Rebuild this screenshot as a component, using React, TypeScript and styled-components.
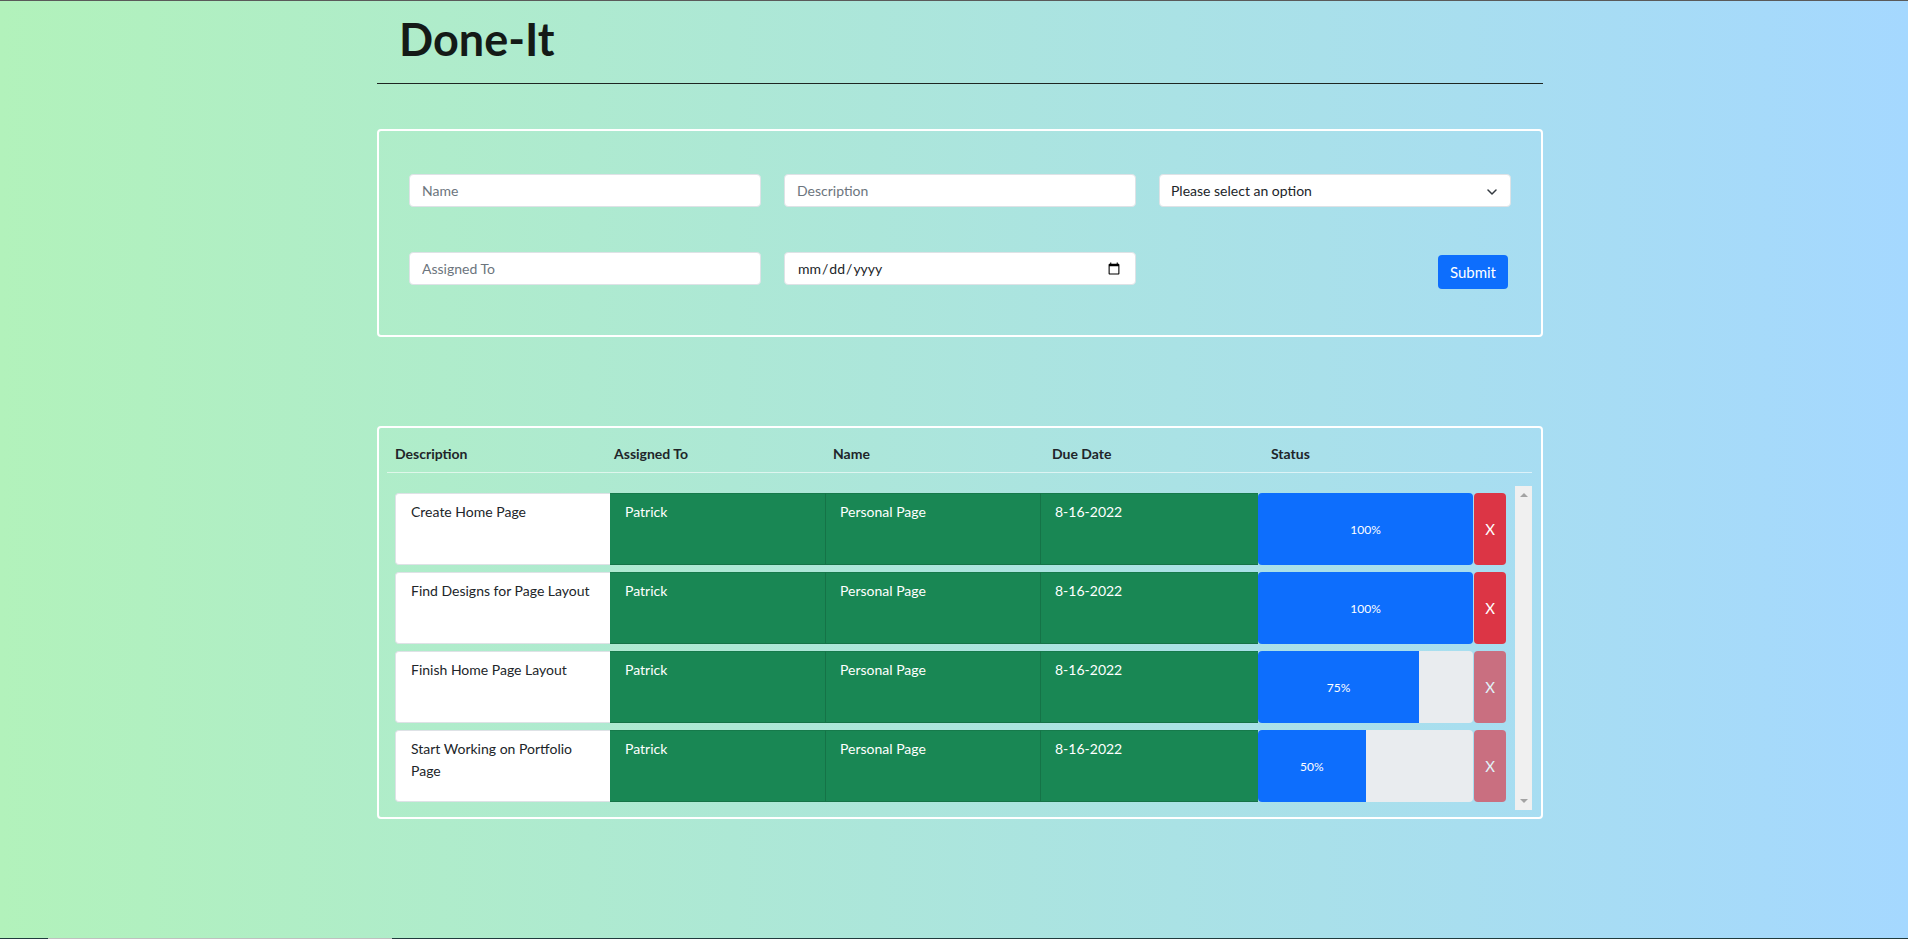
import React from 'react';
import styled, { createGlobalStyle } from 'styled-components';

type Task = {
  description: string;
  assignedTo: string;
  name: string;
  dueDate: string;
  status: number;
};

const tasks: Task[] = [
  { description: 'Create Home Page', assignedTo: 'Patrick', name: 'Personal Page', dueDate: '8-16-2022', status: 100 },
  { description: 'Find Designs for Page Layout', assignedTo: 'Patrick', name: 'Personal Page', dueDate: '8-16-2022', status: 100 },
  { description: 'Finish Home Page Layout', assignedTo: 'Patrick', name: 'Personal Page', dueDate: '8-16-2022', status: 75 },
  { description: 'Start Working on Portfolio Page', assignedTo: 'Patrick', name: 'Personal Page', dueDate: '8-16-2022', status: 50 },
];

const GlobalStyle = createGlobalStyle`
  * { box-sizing: border-box; }
  html {
    min-height: 100%;
    background: linear-gradient(to right, #b2f2bb, #a5d8ff);
  }
  body {
    margin: 0;
    border-top: 1px solid #5a5a5a;
    font-family: Lato, "Noto Sans", sans-serif;
    color: #212529;
  }
`;

const Page = styled.main`
  width: 1166px;
  margin-left: calc(50% - 577px);
  padding-bottom: 40px;
`;

const Title = styled.h1`
  margin: 0;
  padding: 11px 0 0 22px;
  font-size: 45px;
  line-height: 54px;
  font-weight: 700;
  color: #141a17;
`;

const Rule = styled.hr`
  margin: 17px 0 0;
  border: 0;
  border-top: 1px solid #1e2622;
  opacity: 1;
`;

const FormCard = styled.form`
  margin-top: 45px;
  border: 2px solid #fff;
  border-radius: 4px;
  padding: 43px 30px 50px;
  display: grid;
  grid-template-columns: repeat(3, 352px);
  grid-auto-rows: 33px;
  column-gap: 23px;
  row-gap: 45px;
`;

const Field = styled.input`
  width: 100%;
  height: 33px;
  border: 1px solid #dee2e6;
  border-radius: 4px;
  background: #fff;
  padding: 0 12px;
  font-family: Lato, "Noto Sans", sans-serif;
  font-size: 14px;
  color: #212529;
  outline: none;
  &::placeholder {
    color: #6c757d;
  }
`;

const SelectWrap = styled.div`
  position: relative;
`;

const Select = styled.select`
  width: 100%;
  height: 33px;
  border: 1px solid #dee2e6;
  border-radius: 4px;
  background: #fff;
  padding: 0 36px 0 11px;
  font-family: Lato, "Noto Sans", sans-serif;
  font-size: 14px;
  color: #212529;
  appearance: none;
  outline: none;
`;

const Chevron = styled.svg`
  position: absolute;
  right: 14px;
  top: 15px;
  pointer-events: none;
`;

const SubmitCell = styled.div`
  height: 33px;
  display: flex;
  justify-content: flex-end;
  align-items: flex-start;
  padding: 3px 3px 0 0;
`;

const SubmitButton = styled.button`
  flex-shrink: 0;
  height: 34px;
  padding: 0 12px;
  border: none;
  border-radius: 4px;
  background: #0d6efd;
  color: #fff;
  font-family: Lato, "Noto Sans", sans-serif;
  font-size: 15px;
`;

const TableCard = styled.section`
  margin-top: 89px;
  border: 2px solid #fff;
  border-radius: 4px;
  padding: 7px 9px 7px 8px;
`;

const HeaderRow = styled.div`
  display: grid;
  grid-template-columns: repeat(5, 219px) 1fr;
  border-bottom: 1px solid rgba(255, 255, 255, 0.6);
`;

const HeaderCell = styled.div`
  padding: 8px;
  font-size: 14px;
  line-height: 21px;
  font-weight: 700;
  color: #212529;
`;

const ScrollArea = styled.div`
  margin-top: 13px;
  height: 324px;
  overflow: hidden;
  display: flex;
`;

const RowList = styled.div`
  flex: 1;
  padding: 7px 0 8px 8px;
  display: flex;
  flex-direction: column;
  gap: 7px;
`;

const ScrollTrack = styled.div`
  width: 17px;
  flex-shrink: 0;
  background: #f0f0f0;
  display: flex;
  flex-direction: column;
  justify-content: space-between;
`;

const ScrollArrow = styled.div<{ $dir: 'up' | 'down' }>`
  height: 17px;
  display: flex;
  align-items: center;
  justify-content: center;
  &::before {
    content: '';
    width: 0;
    height: 0;
    border-left: 4px solid transparent;
    border-right: 4px solid transparent;
    ${(p) =>
      p.$dir === 'up'
        ? 'border-bottom: 4px solid #a3a3a3; margin-top: 1px;'
        : 'border-top: 4px solid #a3a3a3; margin-top: -1px;'}
  }
`;

const TaskRow = styled.div`
  display: grid;
  grid-template-columns: 215px 215px 215px 218px 215px 33px;
  height: 72px;
  flex-shrink: 0;
`;

const DescCell = styled.div`
  background: #fff;
  border: 1px solid #dee2e6;
  border-right: none;
  border-radius: 4px 0 0 4px;
  padding: 7px 15px;
  font-size: 14px;
  line-height: 22px;
  color: #212529;
`;

const GreenCell = styled.div`
  background: #198754;
  border-top: 1px solid #167a4b;
  border-bottom: 1px solid #157347;
  padding: 7px 14px 7px 15px;
  font-size: 14px;
  line-height: 22px;
  color: #fff;
  & + & {
    border-left: 1px solid #157347;
    padding-left: 14px;
  }
`;

const StatusTrack = styled.div`
  display: flex;
  background: #e9ecef;
  border-radius: 4px;
  overflow: hidden;
`;

const StatusBar = styled.div`
  display: flex;
  align-items: center;
  justify-content: center;
  background: #0d6efd;
  color: #fff;
  font-size: 12px;
`;

const RemoveButton = styled.button`
  margin-left: 1px;
  border: none;
  border-radius: 4px;
  background: #dc3545;
  color: #fff;
  font-family: Lato, "Noto Sans", sans-serif;
  font-size: 15px;
  padding: 0;
  &:disabled {
    opacity: 0.65;
  }
`;

const TaskbarEdge = styled.div`
  position: fixed;
  left: 0;
  right: 0;
  bottom: 0;
  height: 1px;
  background: linear-gradient(to right, #1f3b3d 48px, #c0c0c0 48px, #c0c0c0 392px, #1f3b3d 392px);
`;

export default function App() {
  return (
    <>
      <GlobalStyle />
      <Page>
        <Title>Done-It</Title>
        <Rule />
        <FormCard onSubmit={(e) => e.preventDefault()}>
          <Field type="text" placeholder="Name" />
          <Field type="text" placeholder="Description" />
          <SelectWrap>
            <Select defaultValue="">
              <option value="">Please select an option</option>
              <option value="0">0%</option>
              <option value="25">25%</option>
              <option value="50">50%</option>
              <option value="75">75%</option>
              <option value="100">100%</option>
            </Select>
            <Chevron width="10" height="6" viewBox="0 0 10 6">
              <polyline points="1,1 5,5 9,1" fill="none" stroke="#343a40" strokeWidth="1.5" strokeLinecap="round" strokeLinejoin="round" />
            </Chevron>
          </SelectWrap>
          <Field type="text" placeholder="Assigned To" />
          <Field type="date" />
          <SubmitCell>
            <SubmitButton type="submit">Submit</SubmitButton>
          </SubmitCell>
        </FormCard>

        <TableCard>
          <HeaderRow>
            <HeaderCell>Description</HeaderCell>
            <HeaderCell>Assigned To</HeaderCell>
            <HeaderCell>Name</HeaderCell>
            <HeaderCell>Due Date</HeaderCell>
            <HeaderCell>Status</HeaderCell>
            <HeaderCell />
          </HeaderRow>
          <ScrollArea>
            <RowList>
              {tasks.map((t) => (
                <TaskRow key={t.description}>
                  <DescCell>{t.description}</DescCell>
                  <GreenCell>{t.assignedTo}</GreenCell>
                  <GreenCell>{t.name}</GreenCell>
                  <GreenCell>{t.dueDate}</GreenCell>
                  <StatusTrack>
                    <StatusBar style={{ width: `${t.status}%` }}>{t.status}%</StatusBar>
                  </StatusTrack>
                  <RemoveButton disabled={t.status < 100}>X</RemoveButton>
                </TaskRow>
              ))}
            </RowList>
            <ScrollTrack>
              <ScrollArrow $dir="up" />
              <ScrollArrow $dir="down" />
            </ScrollTrack>
          </ScrollArea>
        </TableCard>
      </Page>
      <TaskbarEdge />
    </>
  );
}
